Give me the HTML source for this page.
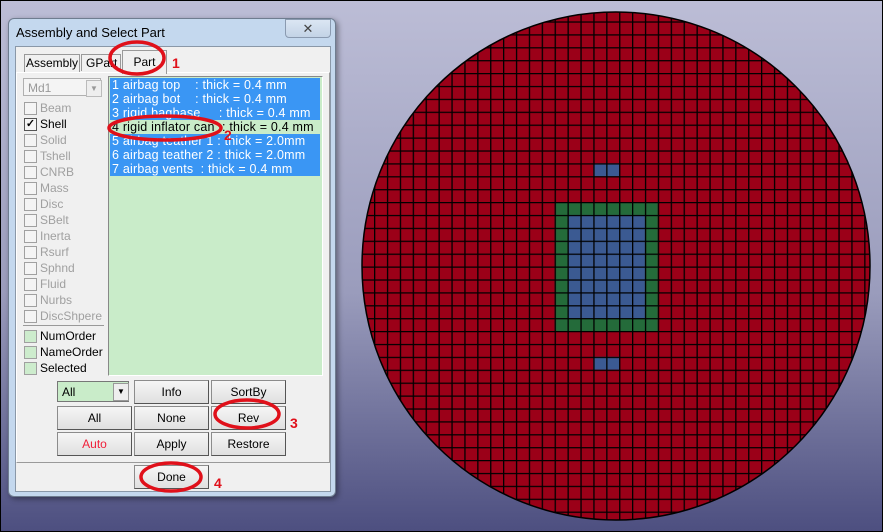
<!DOCTYPE html>
<html><head><meta charset="utf-8"><style>
body{margin:0;width:883px;height:532px;overflow:hidden;position:relative;font-family:"Liberation Sans",sans-serif;font-size:12px;}
#bg{position:absolute;left:0;top:0;width:881px;height:530px;border:1px solid #000;background:linear-gradient(#bcbdd6,#9a9cbc 55%,#4d4f80);}
.a{position:absolute;}
.win{left:8px;top:18px;width:326px;height:477px;background:#c4d8ee;border:1px solid #6f7d90;border-radius:6px;box-shadow:2px 2px 6px rgba(0,0,0,.4);}
.client{left:15px;top:46px;width:314px;height:444px;background:#f0f0f0;border:1px solid #8a98a8;}
.btn{position:absolute;height:22px;background:linear-gradient(#f6f6f6,#e0e0e0);border:1px solid #8c8c8c;border-right-color:#555;border-bottom-color:#555;text-align:center;line-height:22px;box-sizing:border-box;}
.cb{position:absolute;left:24px;width:11px;height:11px;border:1px solid #a0a0a0;background:#f4f4f4;}
.cl{position:absolute;left:40px;color:#a0a0a0;}
.row{position:absolute;left:110px;width:210px;height:14px;line-height:14px;color:#fff;white-space:pre;padding-left:2px;box-sizing:border-box;font-size:12.5px;letter-spacing:0.2px;overflow:hidden;}
</style></head><body>
<div id="bg"></div>
<svg class="a" style="left:0;top:0" width="883" height="532">
<defs><clipPath id="c"><circle cx="616" cy="266" r="254"/></clipPath>
<pattern id="g" x="541.7" y="163.3" width="12.9" height="12.9" patternUnits="userSpaceOnUse"><path d="M0 0H12.9M0 0V12.9" stroke="#000" stroke-width="2.6" fill="none"/></pattern></defs>
<g clip-path="url(#c)">
<rect x="360" y="10" width="512" height="512" fill="#9b0018"/>
<rect x="554.6" y="202" width="103.2" height="129" fill="#246b3a"/>
<rect x="567.5" y="214.9" width="77.4" height="103.2" fill="#3b5a92"/>
<rect x="593.3" y="163.3" width="25.8" height="12.9" fill="#3b5a92"/>
<rect x="593.3" y="356.8" width="25.8" height="12.9" fill="#3b5a92"/>
<rect x="360" y="10" width="512" height="512" fill="url(#g)"/>
</g>
<circle cx="616" cy="266" r="254" fill="none" stroke="#000" stroke-width="1.5"/>
</svg>
<div class="a win"></div>
<div class="a" style="left:16px;top:25px;font-size:13px;color:#000">Assembly and Select Part</div>
<div class="a" style="left:285px;top:19px;width:44px;height:17px;border:1px solid #8a9ab0;border-radius:0 0 4px 4px;background:linear-gradient(#dbe6f3,#c3d3e6);text-align:center;line-height:17px;font-size:13px;color:#444">✕</div>
<div class="a client"></div>
<div class="a" style="left:16px;top:72px;width:312px;height:389px;border:1px solid #9a9a9a;border-left-color:#fff;border-top-color:#fff;"></div>
<div class="a" style="left:24px;top:54px;width:54px;height:17px;border:1px solid #999;border-bottom:none;background:#f0f0f0;line-height:17px;text-align:center">Assembly</div>
<div class="a" style="left:81px;top:54px;width:40px;height:17px;border:1px solid #999;border-bottom:none;background:#f0f0f0;line-height:17px;padding-left:4px;box-sizing:border-box;overflow:hidden">GPart</div>
<div class="a" style="left:122px;top:50px;width:43px;height:23px;border:1px solid #999;border-bottom:none;background:#f0f0f0;line-height:22px;text-align:center">Part</div>
<div class="a" style="left:23px;top:78px;width:78px;height:18px;border:1px solid #b0b0b0;background:#f4f4f4;color:#999;line-height:18px;padding-left:4px;box-sizing:border-box">Md1</div>
<div class="a" style="left:86px;top:80px;width:14px;height:15px;border:1px solid #bbb;background:#eee;color:#999;font-size:8px;text-align:center;line-height:15px">▼</div>
<div class="cb" style="top:102px"></div><div class="cl" style="top:101px">Beam</div>
<div class="cb" style="top:118px;border-color:#555;text-align:center;line-height:10px;font-size:11px;font-weight:bold">✓</div><div class="cl" style="top:117px;color:#000">Shell</div>
<div class="cb" style="top:134px"></div><div class="cl" style="top:133px">Solid</div>
<div class="cb" style="top:150px"></div><div class="cl" style="top:149px">Tshell</div>
<div class="cb" style="top:166px"></div><div class="cl" style="top:165px">CNRB</div>
<div class="cb" style="top:182px"></div><div class="cl" style="top:181px">Mass</div>
<div class="cb" style="top:198px"></div><div class="cl" style="top:197px">Disc</div>
<div class="cb" style="top:214px"></div><div class="cl" style="top:213px">SBelt</div>
<div class="cb" style="top:230px"></div><div class="cl" style="top:229px">Inerta</div>
<div class="cb" style="top:246px"></div><div class="cl" style="top:245px">Rsurf</div>
<div class="cb" style="top:262px"></div><div class="cl" style="top:261px">Sphnd</div>
<div class="cb" style="top:278px"></div><div class="cl" style="top:277px">Fluid</div>
<div class="cb" style="top:294px"></div><div class="cl" style="top:293px">Nurbs</div>
<div class="cb" style="top:310px"></div><div class="cl" style="top:309px">DiscShpere</div>
<div class="a" style="left:23px;top:325px;width:81px;height:1px;background:#999"></div>
<div class="cb" style="top:330px;background:#cdeccd"></div><div class="cl" style="top:329px;color:#000">NumOrder</div>
<div class="cb" style="top:346px;background:#cdeccd"></div><div class="cl" style="top:345px;color:#000">NameOrder</div>
<div class="cb" style="top:362px;background:#cdeccd"></div><div class="cl" style="top:361px;color:#000">Selected</div>
<div class="a" style="left:108px;top:76px;width:213px;height:298px;border:1px solid #888;border-right-color:#fff;border-bottom-color:#fff;background:#c9ecc9"></div>
<div class="row" style="top:78px;background:#3a96f4">1 airbag top    : thick = 0.4 mm</div>
<div class="row" style="top:92px;background:#3a96f4">2 airbag bot    : thick = 0.4 mm</div>
<div class="row" style="top:106px;background:#3a96f4">3 rigid bagbase     : thick = 0.4 mm</div>
<div class="row" style="top:120px;color:#000">4 rigid inflator can  : thick = 0.4 mm</div>
<div class="row" style="top:134px;background:#3a96f4">5 airbag teather 1 : thick = 2.0mm</div>
<div class="row" style="top:148px;background:#3a96f4">6 airbag teather 2 : thick = 2.0mm</div>
<div class="row" style="top:162px;background:#3a96f4">7 airbag vents  : thick = 0.4 mm</div>
<div class="a" style="left:57px;top:381px;width:72px;height:21px;border:1px solid #777;background:#c9ecc9;line-height:21px;padding-left:4px;box-sizing:border-box">All</div>
<div class="a" style="left:113px;top:383px;width:14px;height:16px;background:#eee;border:1px solid #999;font-size:8px;text-align:center;line-height:16px">▼</div>
<div class="btn" style="left:134px;top:380px;width:75px;height:24px">Info</div>
<div class="btn" style="left:211px;top:380px;width:75px;height:24px">SortBy</div>
<div class="btn" style="left:57px;top:406px;width:75px;height:24px">All</div>
<div class="btn" style="left:134px;top:406px;width:75px;height:24px">None</div>
<div class="btn" style="left:211px;top:406px;width:75px;height:24px">Rev</div>
<div class="btn" style="left:57px;top:432px;width:75px;height:24px;color:#f0203a">Auto</div>
<div class="btn" style="left:134px;top:432px;width:75px;height:24px">Apply</div>
<div class="btn" style="left:211px;top:432px;width:75px;height:24px">Restore</div>
<div class="btn" style="left:134px;top:465px;width:75px;height:24px">Done</div>
<svg class="a" style="left:0;top:0" width="340" height="532">
<g fill="none" stroke="#e0101a" stroke-width="3.5">
<ellipse cx="137" cy="58" rx="27" ry="16"/>
<ellipse cx="165" cy="128" rx="56" ry="12"/>
<ellipse cx="247" cy="414" rx="32" ry="14"/>
<ellipse cx="171" cy="477" rx="30" ry="14"/>
</g>
<g fill="#e0101a" font-family="Liberation Sans" font-weight="bold" font-size="14">
<text x="172" y="68">1</text><text x="224" y="140">2</text><text x="290" y="428">3</text><text x="214" y="488">4</text>
</g>
</svg>
</body></html>
